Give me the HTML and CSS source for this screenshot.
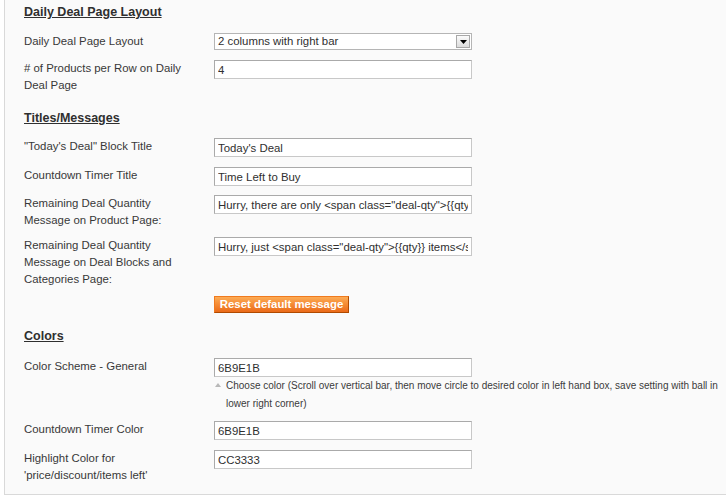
FILE: index.html
```html
<!DOCTYPE html>
<html>
<head>
<meta charset="utf-8">
<link rel="stylesheet" href="styles.css">
</head>
<body>
<div class="panel">
  <h3 class="sec sec-first">Daily Deal Page Layout</h3>
  <div class="row g13">
    <div class="label">Daily Deal Page Layout</div>
    <div class="value">
      <div class="select">
        <span class="sel-text">2 columns with right bar</span>
        <span class="sel-btn"><svg width="7" height="4" viewBox="0 0 7 4"><path d="M0 0H7L3.5 4Z" fill="#000"/></svg></span>
      </div>
    </div>
  </div>
  <div class="row g10">
    <div class="label">#&nbsp;of Products per Row on Daily Deal Page</div>
    <div class="value"><input class="txt" type="text" value="4"></div>
  </div>

  <h3 class="sec g16">Titles/Messages</h3>
  <div class="row g12">
    <div class="label">"Today's Deal" Block Title</div>
    <div class="value"><input class="txt" type="text" value="Today's Deal"></div>
  </div>
  <div class="row g10">
    <div class="label">Countdown Timer Title</div>
    <div class="value"><input class="txt" type="text" value="Time Left to Buy"></div>
  </div>
  <div class="row g9">
    <div class="label">Remaining Deal Quantity Message on Product Page:</div>
    <div class="value"><input class="txt" type="text" value='Hurry, there are only &lt;span class="deal-qty"&gt;{{qty}} items&lt;/span&gt; left!'></div>
  </div>
  <div class="row g8">
    <div class="label">Remaining Deal Quantity Message on Deal Blocks and Categories Page:</div>
    <div class="value"><input class="txt" type="text" value='Hurry, just &lt;span class="deal-qty"&gt;{{qty}} items&lt;/span&gt; left!'></div>
  </div>
  <div class="row g8">
    <div class="label"></div>
    <div class="value"><button class="btn" type="button">Reset default message</button></div>
  </div>

  <h3 class="sec g15">Colors</h3>
  <div class="row g14">
    <div class="label">Color Scheme - General</div>
    <div class="value">
      <input class="txt" type="text" value="6B9E1B">
      <div class="note">
        <span class="arrow"></span>
        <p class="note-text">Choose color (Scroll over vertical bar, then move circle to desired color in left hand box, save setting with ball in lower right corner)</p>
      </div>
    </div>
  </div>
  <div class="row g8">
    <div class="label">Countdown Timer Color</div>
    <div class="value"><input class="txt" type="text" value="6B9E1B"></div>
  </div>
  <div class="row g10">
    <div class="label">Highlight Color for 'price/discount/items left'</div>
    <div class="value"><input class="txt" type="text" value="CC3333"></div>
  </div>
</div>
</body>
</html>
```

FILE: styles.css
```css
html, body {
  margin: 0;
  padding: 0;
  background: #ffffff;
}
body {
  font-family: "Liberation Sans", Arial, sans-serif;
  font-size: 11.4px;
  color: #383838;
  overflow: hidden;
}
.panel {
  margin-left: 4px;
  background: #fafafa;
  border-left: 1px solid #d9d9d9;
  border-bottom: 1px solid #d9d9d9;
  padding: 4px 0 10px 19px;
}
.sec {
  margin: 0;
  font-size: 12.5px;
  line-height: 16px;
  font-weight: bold;
  color: #2f2f2f;
  text-decoration: underline;
}
.row {
  display: grid;
  grid-template-columns: 190px 1fr;
  align-items: start;
}
.g8 { margin-top: 8px; }
.g9 { margin-top: 9px; }
.g10 { margin-top: 10px; }
.g12 { margin-top: 12px; }
.g13 { margin-top: 13px; }
.g14 { margin-top: 14px; }
.g15 { margin-top: 15px; }
.g16 { margin-top: 16px; }
.label {
  line-height: 17px;
  width: 170px;
}
.value {
  min-width: 0;
}
.txt {
  display: block;
  box-sizing: border-box;
  width: 258px;
  height: 19px;
  margin: 0;
  padding: 0 3px;
  border: 1px solid #c8c8c8;
  border-color: #aaaaaa #c8c8c8 #c8c8c8 #aaaaaa;
  background: #ffffff;
  font-family: "Liberation Sans", Arial, sans-serif;
  font-size: 11.4px;
  color: #2f2f2f;
  outline: none;
}
.select {
  box-sizing: border-box;
  width: 258px;
  height: 17px;
  border: 1px solid #b5b5b5;
  background: #ffffff;
  display: flex;
  align-items: center;
  justify-content: space-between;
  padding: 0 1px 0 3px;
}
.sel-text {
  color: #2f2f2f;
  line-height: 15px;
}
.sel-btn {
  box-sizing: border-box;
  width: 14px;
  height: 13px;
  border: 1px solid #a8a8a8;
  background: linear-gradient(#fbfbfb, #dcdcdc);
  display: flex;
  align-items: center;
  justify-content: center;
}
.btn {
  display: block;
  box-sizing: border-box;
  width: 135px;
  height: 17px;
  margin: 0;
  padding: 0;
  border: 1px solid #ed6502;
  border-color: #f07a1e #b04a00 #b04a00 #f07a1e;
  background: linear-gradient(#fcab55, #f58a32 50%, #ea6a1a);
  color: #ffffff;
  font-family: "Liberation Sans", Arial, sans-serif;
  font-size: 11.4px;
  font-weight: bold;
  line-height: 15px;
  text-align: center;
}
.note {
  display: flex;
  align-items: flex-start;
}
.arrow {
  flex: none;
  width: 0;
  height: 0;
  margin: 6px 5px 0 1px;
  border-left: 3px solid transparent;
  border-right: 3px solid transparent;
  border-bottom: 4px solid #b8b8b8;
}
.note-text {
  margin: 0;
  width: 500px;
  font-size: 10px;
  line-height: 18px;
  color: #3a3a3a;
}
```
